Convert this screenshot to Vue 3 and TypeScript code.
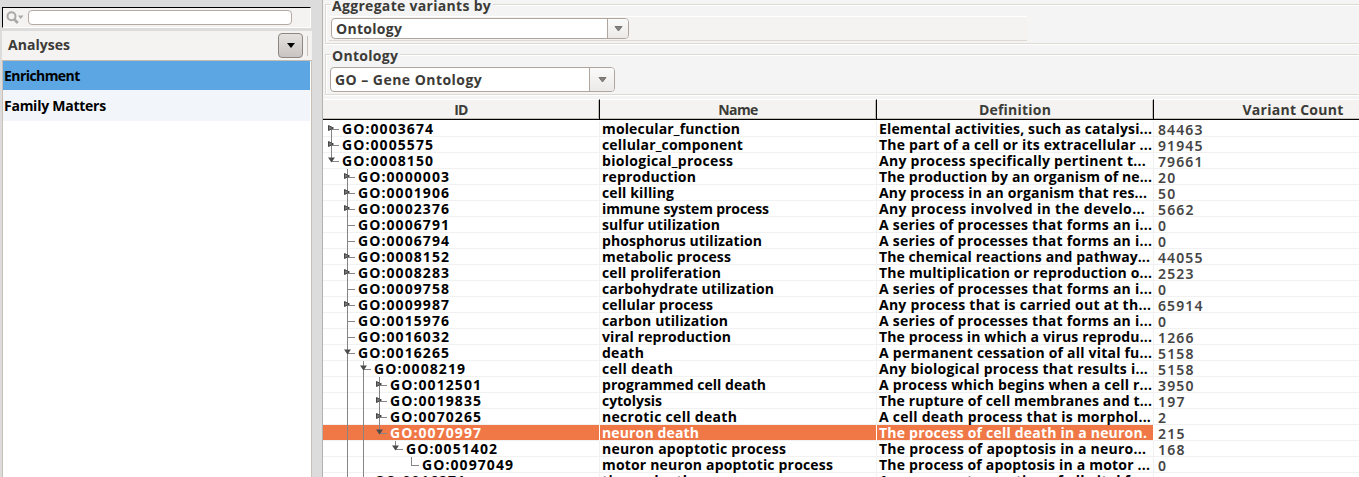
<script setup lang="ts">
import { type Directive } from 'vue'

type Mark = 'closed' | 'open' | 'leaf'
interface Row {
  id: string
  depth: number
  mark: Mark
  name: string
  nameWidth: number
  definition: string
  definitionWidth: number
  count: string
  selected?: boolean
}

const row = (
  id: string, depth: number, mark: Mark, name: string, nameWidth: number,
  definition: string, definitionWidth: number, count: string, selected = false,
): Row => ({ id, depth, mark, name, nameWidth, definition, definitionWidth, count, selected })

const rows: Row[] = [
  row('GO:0003674', 0, 'closed', 'molecular_function', 138, 'Elemental activities, such as catalysi...', 273, '84463'),
  row('GO:0005575', 0, 'closed', 'cellular_component', 141, 'The part of a cell or its extracellular ...', 273, '91945'),
  row('GO:0008150', 0, 'open', 'biological_process', 131, 'Any process specifically pertinent t...', 267, '79661'),
  row('GO:0000003', 1, 'closed', 'reproduction', 94, 'The production by an organism of ne...', 273, '20'),
  row('GO:0001906', 1, 'closed', 'cell killing', 72, 'Any process in an organism that res...', 268, '50'),
  row('GO:0002376', 1, 'closed', 'immune system process', 167, 'Any process involved in the develo...', 266, '5662'),
  row('GO:0006791', 1, 'leaf', 'sulfur utilization', 118, 'A series of processes that forms an i...', 273, '0'),
  row('GO:0006794', 1, 'leaf', 'phosphorus utilization', 160, 'A series of processes that forms an i...', 273, '0'),
  row('GO:0008152', 1, 'closed', 'metabolic process', 129, 'The chemical reactions and pathway...', 271, '44055'),
  row('GO:0008283', 1, 'closed', 'cell proliferation', 119, 'The multiplication or reproduction o...', 273, '2523'),
  row('GO:0009758', 1, 'leaf', 'carbohydrate utilization', 172, 'A series of processes that forms an i...', 273, '0'),
  row('GO:0009987', 1, 'closed', 'cellular process', 111, 'Any process that is carried out at th...', 272, '65914'),
  row('GO:0015976', 1, 'leaf', 'carbon utilization', 126, 'A series of processes that forms an i...', 273, '0'),
  row('GO:0016032', 1, 'leaf', 'viral reproduction', 129, 'The process in which a virus reprodu...', 273, '1266'),
  row('GO:0016265', 1, 'open', 'death', 42, 'A permanent cessation of all vital fu...', 273, '5158'),
  row('GO:0008219', 2, 'open', 'cell death', 71, 'Any biological process that results i...', 269, '5158'),
  row('GO:0012501', 3, 'closed', 'programmed cell death', 164, 'A process which begins when a cell r...', 273, '3950'),
  row('GO:0019835', 3, 'closed', 'cytolysis', 60, 'The rupture of cell membranes and t...', 273, '197'),
  row('GO:0070265', 3, 'closed', 'necrotic cell death', 135, 'A cell death process that is morphol...', 272, '2'),
  row('GO:0070997', 3, 'open', 'neuron death', 97, 'The process of cell death in a neuron.', 268, '215', true),
  row('GO:0051402', 4, 'open', 'neuron apoptotic process', 184, 'The process of apoptosis in a neuro...', 267, '168'),
  row('GO:0097049', 5, 'leaf', 'motor neuron apoptotic process', 231, 'The process of apoptosis in a motor ...', 271, '0'),
  row('GO:0016271', 2, 'leaf', 'tissue death', 90, 'A permanent cessation of all vital fu...', 273, ''),
]

const columns = [
  { label: 'ID', width: 14 },
  { label: 'Name', width: 40 },
  { label: 'Definition', width: 72 },
  { label: 'Variant Count', width: 101 },
]

// Tracks a label so that it fills the given advance width.
const vFit: Directive<HTMLElement, number> = {
  mounted(el, { value }) {
    const natural = el.getBoundingClientRect().width
    const length = el.textContent?.length ?? 0
    if (length > 1) el.style.letterSpacing = `${(value - natural) / (length - 0.5)}px`
  },
}

const ancestorLines = (index: number): number[] => {
  const lines: number[] = []
  if (index > 14) lines.push(1)
  if (index > 15) lines.push(2)
  return lines.filter((d) => d < rows[index].depth)
}
const continues = (index: number): boolean => {
  const depth = rows[index].depth
  for (let i = index + 1; i < rows.length; i++) {
    if (rows[i].depth < depth) return false
    if (rows[i].depth === depth) return true
  }
  return depth === 1 || depth === 2
}
</script>

<template>
  <div class="window">
    <aside class="side">
      <div class="search">
        <svg class="lens" width="20" height="14" viewBox="0 0 20 14">
          <circle cx="5.5" cy="5.2" r="4" fill="none" stroke="#aaa9a6" stroke-width="2" />
          <path d="M8 8l3.8 4" stroke="#aaa9a6" stroke-width="2.6" />
          <path d="M12 4.5h5.5L14.7 8z" fill="#aaa9a6" />
        </svg>
        <div class="search-input"></div>
      </div>
      <div class="side-head">
        <span class="side-title"><span v-fit="62">Analyses</span></span>
        <button class="menu" type="button"><svg width="8" height="5"><path d="M0 0h8L4 5z" fill="#000" /></svg></button>
        <i class="rule"></i>
      </div>
      <div class="list">
        <div class="item active"><span v-fit="76">Enrichment</span></div>
        <div class="item"><span v-fit="102">Family Matters</span></div>
      </div>
    </aside>

    <main class="main">
      <section class="group first">
        <span class="legend"><span v-fit="159">Aggregate variants by</span></span>
        <div class="toolbar">
          <div class="combo">
            <div class="combo-text"><span v-fit="66">Ontology</span></div>
            <div class="combo-arrow"><svg width="9" height="6"><path d="M1 .5h7L4.5 5z" fill="#858380" stroke="#757370" /></svg></div>
          </div>
        </div>
      </section>
      <section class="group second">
        <span class="legend"><span v-fit="66">Ontology</span></span>
        <div class="combo tall">
          <div class="combo-text"><span v-fit="147">GO – Gene Ontology</span></div>
          <div class="combo-arrow"><svg width="9" height="6"><path d="M1 .5h7L4.5 5z" fill="#858380" stroke="#757370" /></svg></div>
        </div>
      </section>

      <div class="table">
        <div class="line head">
          <div v-for="c in columns" :key="c.label" class="th"><span v-fit="c.width">{{ c.label }}</span></div>
        </div>
        <div v-for="(r, i) in rows" :key="r.id" class="line row" :class="{ selected: r.selected }">
          <div class="cell">
            <svg class="tree" :width="18 + r.depth * 16" height="16">
              <g fill="none" stroke="#858585" shape-rendering="crispEdges">
                <path v-for="d in ancestorLines(i)" :key="d" :d="`M${d * 16 + 8.5} 0v16`" />
                <path :d="`M${r.depth * 16 + 8.5} ${i === 0 ? 8 : 0}V${continues(i) ? 16 : 8.5}M${r.depth * 16 + 8} 8.5h8`" />
              </g>
              <path v-if="r.mark === 'closed'" :d="`M${r.depth * 16 + 5.5} 4.5v5l5-2.5z`" fill="#777" stroke="#444" />
              <path v-if="r.mark === 'open'" :d="`M${r.depth * 16 + 5} 4.5h7l-3.5 5z`" fill="#4c4c4c" />
            </svg>
            <span v-fit="91.5">{{ r.id }}</span>
          </div>
          <div class="cell text"><span v-fit="r.nameWidth">{{ r.name }}</span></div>
          <div class="cell text"><span v-fit="r.definitionWidth">{{ r.definition }}</span></div>
          <div class="cell count"><span v-fit="r.count.length * 9">{{ r.count }}</span></div>
        </div>
      </div>
    </main>
  </div>
</template>

<style>
html, body { overflow: hidden; }
</style>

<style scoped>
* { box-sizing: border-box; }
.window {
  display: flex;
  width: 1359px;
  height: 477px;
  overflow: hidden;
  background: #dcdcdc;
  font: 700 14px/16px "Open Sans", "Noto Sans", sans-serif;
  color: #3c3b37;
  white-space: pre;
}
.side { width: 312px; padding: 7px 0 0 2px; display: flex; flex-direction: column; }
.search {
  height: 21px;
  display: flex;
  align-items: center;
  background: #f4f3f1;
  border: 1px solid #fff;
  border-top-color: #000;
  border-left-color: #000;
  padding-left: 3px;
  margin-right: 1px;
}
.lens { flex: none; }
.search-input { width: 264px; height: 15px; margin-left: 2px; border: 1px solid #b5aaa1; border-radius: 4px; background: #fff; }
.side-head {
  margin-top: 3px;
  height: 30px;
  background: #f4f3f1;
  border-bottom: 1px solid #c3bcb4;
  display: flex;
  align-items: center;
  padding-left: 6px;
}
.side-title { width: 270px; padding-bottom: 2px; }
.menu { width: 25px; height: 25px; padding: 0; border: 1px solid #8c8782; border-radius: 4px; background: linear-gradient(#e4e1df, #c9c4c1); display: flex; align-items: center; justify-content: center; }
.rule { width: 1px; height: 20px; margin-left: 4px; background: #c9c1b8; }
.list { flex: 1; background: #fff; border: solid #c9c1b8; border-width: 0 1px; color: #000; }
.item { height: 31px; padding-left: 1px; line-height: 32px; background: #f2f6fb; margin-right: 1px; }
.item.active { height: 29px; line-height: 30px; background: #5ba6e3; }
.main { flex: 1; min-width: 0; background: #f4f4f4; border-left: 1px solid #b5b3b0; margin-left: 10px; }
.group { position: relative; border: 1px solid #ddd9d3; border-right: 0; margin-left: 2px; box-shadow: inset 1px 1px #fff, 0 1px #fff; }
.first { height: 40px; margin-top: 4px; }
.second { height: 41px; margin-top: 10px; padding: 12px 0 0 4px; }
.legend { position: absolute; left: 5px; top: -7px; padding: 0 2px 0 1px; background: #f4f4f4; line-height: 16px; }
.toolbar { width: 698px; height: 25px; margin: 11px 0 0 3px; padding: 1px 0 0 2px; border-top: 1px solid #fff; border-bottom: 1px solid #ddd9d3; background: #f4f3f1; }
.combo { width: 298px; height: 21px; display: flex; border: 1px solid #b0a69d; border-radius: 4px; background: #fff; }
.combo-text { flex: 1; padding-left: 4px; line-height: 19px; }
.combo-arrow { width: 21px; border-left: 1px solid #b0a69d; border-radius: 0 3px 3px 0; background: linear-gradient(#fafafa, #eceae8); display: flex; align-items: center; justify-content: center; padding-top: 1px; }
.tall { width: 285px; height: 25px; }
.tall .combo-text { line-height: 24px; }
.tall .combo-arrow { width: 25px; }
.table { margin-top: 4px; color: #000; background: #fff; }
.line { display: grid; grid-template-columns: 277px 277px 277px 205px; }
.head { height: 21px; border-bottom: 1px solid #000; background: #f4f3f1; color: #3c3b37; }
.th { width: 100%; text-align: center; line-height: 19px; border-right: 1px solid #000; border-top: 1px solid #fff; box-shadow: inset -1px -1px #c3bdb5; }
.th:last-child { width: 278px; border-right: 0; }
.row { height: 16px; }
.row:nth-child(2) { margin-top: 1px; }
.cell { height: 16px; display: flex; border-right: 1px solid #f1f1f1; border-bottom: 1px solid #f1f1f1; line-height: 15px; }
.cell:last-child { border-right: 0; }
.tree { flex: none; margin-right: 1px; }
.text { padding-left: 2px; }
.count { padding-left: 4px; padding-top: 1px; color: #454545; font-family: "Noto Sans", sans-serif; font-weight: 600; }
.selected .cell:not(.count) { background: #f07746; color: #fff; border-right-color: #fff; }
</style>
